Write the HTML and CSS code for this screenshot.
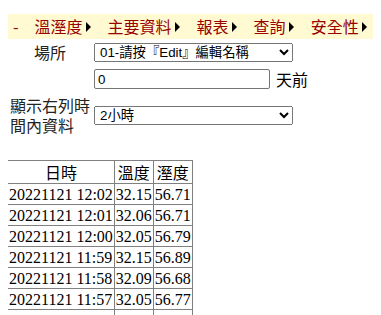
FILE: index.html
```html
<!DOCTYPE html>
<html lang="zh-Hant">
<head>
    <meta charset="UTF-8">
    <meta name="viewport" content="width=device-width, initial-scale=1.0">
    <title>溫溼度</title>
    <link rel="stylesheet" href="styles.css">
</head>
<body>

<div class="menu">
    <span class="menu-dash">-</span>
    <span class="menu-item">溫溼度<i class="arrow"></i></span>
    <span class="menu-item">主要資料<i class="arrow"></i></span>
    <span class="menu-item">報表<i class="arrow"></i></span>
    <span class="menu-item">查詢<i class="arrow"></i></span>
    <span class="menu-item">安全性<i class="arrow"></i></span>
</div>

<form class="filter">
    <label class="filter-label" for="place">場所</label>
    <div class="filter-field">
        <select id="place" class="select-wide">
            <option>01-請按『Edit』編輯名稱</option>
        </select>
    </div>

    <div class="filter-label"></div>
    <div class="filter-field">
        <input type="text" id="days" class="input-days" value="0">
        <span class="unit">天前</span>
    </div>

    <label class="filter-label" for="range"><span class="label-wrap">顯示右列時間內資料</span></label>
    <div class="filter-field">
        <select id="range" class="select-wide">
            <option>2小時</option>
        </select>
    </div>
</form>

<table class="data">
    <tr>
        <th>日時</th>
        <th>溫度</th>
        <th>溼度</th>
    </tr>
    <tr><td>20221121 12:02</td><td>32.15</td><td>56.71</td></tr>
    <tr><td>20221121 12:01</td><td>32.06</td><td>56.71</td></tr>
    <tr><td>20221121 12:00</td><td>32.05</td><td>56.79</td></tr>
    <tr><td>20221121 11:59</td><td>32.15</td><td>56.89</td></tr>
    <tr><td>20221121 11:58</td><td>32.09</td><td>56.68</td></tr>
    <tr><td>20221121 11:57</td><td>32.05</td><td>56.77</td></tr>
    <tr><td>20221121 11:56</td><td>32.06</td><td>56.74</td></tr>
</table>

</body>
</html>
```

FILE: styles.css
```css
body {
    margin: 8px;
    font-family: "Noto Sans CJK TC", "Liberation Sans", sans-serif;
    font-size: 16px;
    color: #000;
}
.menu {
    display: flex;
    align-items: center;
    width: fit-content;
    height: 25px;
    margin-top: 6px;
    padding: 0 6px 0 5px;
    background-color: #fffad2;
    color: #990000;
    line-height: 25px;
}
.menu-dash {
    margin-right: 16px;
}
.menu-item {
    display: flex;
    align-items: center;
    margin-right: 17px;
}
.menu-item:last-child {
    margin-right: 0;
}
.arrow {
    display: inline-block;
    width: 0;
    height: 0;
    margin-left: 3px;
    border-left: 5px solid #000;
    border-top: 5px solid transparent;
    border-bottom: 5px solid transparent;
}
.filter {
    display: grid;
    grid-template-columns: 84px auto;
    grid-template-rows: 22px 24px 40px;
    column-gap: 2px;
    row-gap: 4px;
    margin-top: 2px;
}
.filter-label {
    display: flex;
    align-items: center;
    justify-content: center;
    text-align: center;
    line-height: 20px;
    color: #222;
}
.label-wrap {
    display: block;
    width: 80px;
    text-align: left;
}
.filter-field {
    display: flex;
    align-items: center;
}
.select-wide {
    width: 199px;
    height: 19px;
    padding: 0 1px;
    font-family: "Liberation Sans", "Noto Sans CJK TC", sans-serif;
    font-size: 13.33px;
}
.input-days {
    width: 176px;
    height: 20px;
    box-sizing: border-box;
    padding: 1px 3px;
    border: 1px solid #767676;
    border-radius: 2px;
    font-family: "Liberation Sans", "Noto Sans CJK TC", sans-serif;
    font-size: 13.33px;
}
.unit {
    margin-left: 6px;
}
.data {
    margin-top: 25px;
    margin-left: -1px;
    border-collapse: collapse;
    font-family: "Liberation Serif", "Noto Sans CJK TC", serif;
}
.data th,
.data td {
    border: 1px solid #808080;
    padding: 1px;
    white-space: nowrap;
}
.data th {
    font-family: "Noto Sans CJK TC", sans-serif;
    font-weight: normal;
    line-height: 20px;
}
.data td {
    padding: 2px 1px 0;
    line-height: 18px;
}
```
